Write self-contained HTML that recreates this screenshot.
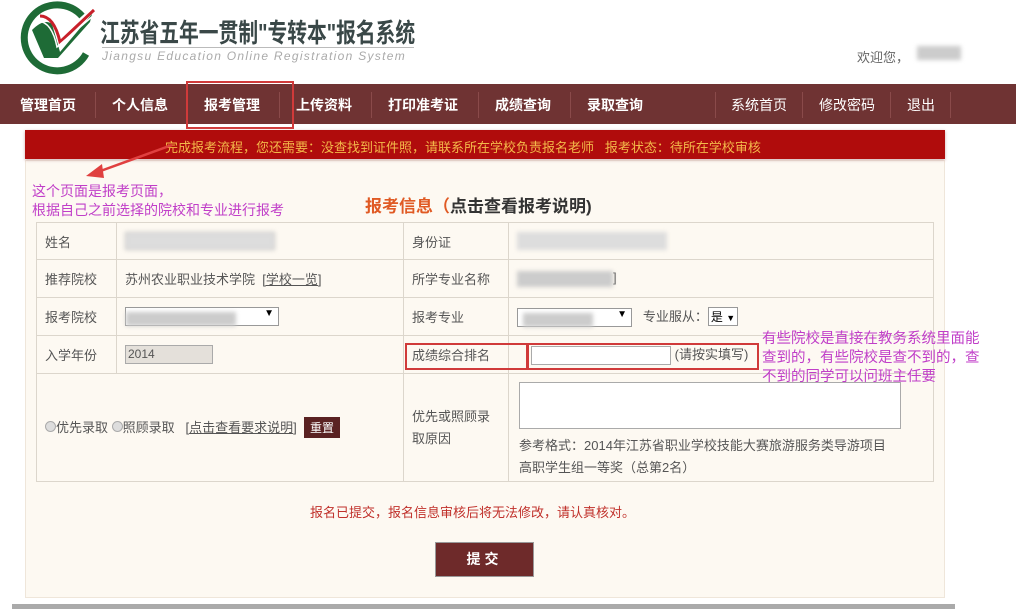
<!DOCTYPE html>
<html><head><meta charset="utf-8"><style>
*{margin:0;padding:0;box-sizing:border-box}
body{width:1016px;height:616px;background:#fff;position:relative;overflow:hidden;font-family:"Liberation Sans","Noto Sans CJK SC",sans-serif;color:#555;font-size:13px}
.a{position:absolute;white-space:nowrap}
.nav{position:absolute;left:0;top:84px;width:1016px;height:40px;background:#6f3333}
.nav span{position:absolute;top:11px;color:#fff;font-size:14px;font-weight:bold}
.nav span.l{font-weight:normal}
.nav i{position:absolute;top:8px;width:1px;height:26px;background:#5a2424;border-right:1px solid #8a4a4a}
.panel{position:absolute;left:25px;top:160px;width:920px;height:438px;background:#fdf9f2;border:1px solid #efe6da}
table{position:absolute;left:36px;top:222px;width:898px;border-collapse:collapse;background:#fdf9f2}
td{border:1px solid #dcd6cc;padding:0 8px;font-size:13px;color:#555;vertical-align:middle}
.blur{display:inline-block;background:#ccc;filter:blur(2px)}
.box{position:absolute;border:3px solid #d03a3a}
.purple{color:#c03ec8}
</style></head><body>
<svg class="a" style="left:10px;top:0px" width="92" height="76" viewBox="0 0 92 76">
<path d="M72 16 A33 33 0 1 0 76 54" fill="none" stroke="#1e6b36" stroke-width="7"/>
<path d="M22 30 Q34 18 42 24 L50 52 L82 14 L80 22 L48 58 L34 58 Z" fill="#1e6b36"/>
<path d="M30 16 Q44 16 50 42 L84 10" fill="none" stroke="#c8202a" stroke-width="3"/>
<path d="M28 21 Q42 22 47 47 L84 15" fill="none" stroke="#fff" stroke-width="1.5"/>
</svg>
<div class="a" style="left:100px;top:13px;font-size:26px;color:#3a4848;font-weight:bold;transform:scaleX(0.76);transform-origin:0 0">江苏省五年一贯制"专转本"报名系统</div>
<div class="a" style="left:102px;top:47px;width:312px;border-top:1px solid #bbb"></div>
<div class="a" style="left:102px;top:49px;font-size:12px;color:#aaa;font-style:italic;letter-spacing:1.3px">Jiangsu Education Online Registration System</div>
<div class="a" style="left:857px;top:47px;color:#666">欢迎您，</div>
<div class="a blur" style="left:917px;top:46px;width:44px;height:14px"></div>
<div class="nav">
<span style="left:20px">管理首页</span><i style="left:95px"></i>
<span style="left:112px">个人信息</span><i style="left:187px"></i>
<span style="left:204px">报考管理</span><i style="left:279px"></i>
<span style="left:296px">上传资料</span><i style="left:371px"></i>
<span style="left:388px">打印准考证</span><i style="left:478px"></i>
<span style="left:495px">成绩查询</span><i style="left:570px"></i>
<span class="l" style="left:731px">系统首页</span><i style="left:715px"></i><i style="left:802px"></i>
<span class="l" style="left:819px">修改密码</span><i style="left:890px"></i>
<span class="l" style="left:907px">退出</span><i style="left:950px"></i>
<span style="left:587px">录取查询</span>
</div>
<div class="box" style="left:186px;top:81px;width:108px;height:48px;border-width:2px"></div>
<div class="panel"></div>
<div class="a" style="left:25px;top:130px;width:920px;height:29px;background:#b00c0c;box-shadow:0 1px 3px #caa"></div>
<div class="a" style="left:165px;top:137px;color:#f3b94a;font-size:13px">完成报考流程，您还需要：没查找到证件照，请联系所在学校负责报名老师&nbsp;&nbsp;&nbsp;报考状态：待所在学校审核</div>
<svg class="a" style="left:80px;top:140px" width="100" height="45"><line x1="92" y1="5" x2="15" y2="33" stroke="#e04040" stroke-width="2.5"/><polygon points="6,36 22,24 24,38" fill="#e04040"/></svg>
<div class="a purple" style="left:32px;top:182px;font-size:14px;line-height:19px">这个页面是报考页面，<br>根据自己之前选择的院校和专业进行报考</div>
<div class="a" style="left:365px;top:192px;font-size:17px;font-weight:bold;color:#333"><span style="color:#e05a24">报考信息（</span>点击查看报考说明)</div>
<table>
<tr style="height:37px"><td style="width:80px">姓名</td><td style="width:287px"><span class="blur" style="width:150px;height:18px;background:#ddd;vertical-align:middle;border:1px solid #bbb"></span></td><td style="width:105px">身份证</td><td><span class="blur" style="width:150px;height:18px;background:#ddd;vertical-align:middle"></span></td></tr>
<tr style="height:38px"><td>推荐院校</td><td>苏州农业职业技术学院&nbsp;&nbsp;<u>[学校一览]</u></td><td>所学专业名称</td><td><span class="blur" style="width:96px;height:16px;vertical-align:middle"></span>]</td></tr>
<tr style="height:38px"><td>报考院校</td><td><span style="display:inline-block;width:154px;height:19px;border:1px solid #999;background:#fff;vertical-align:middle;position:relative"><span class="blur" style="position:absolute;left:0;top:4px;width:110px;height:14px"></span><span style="position:absolute;right:4px;top:0;font-size:10px;color:#000">▼</span></span></td><td>报考专业</td><td><span style="display:inline-block;width:115px;height:19px;border:1px solid #999;background:#fff;vertical-align:middle;position:relative"><span class="blur" style="position:absolute;left:5px;top:4px;width:70px;height:14px"></span><span style="position:absolute;right:4px;top:0;font-size:10px;color:#000">▼</span></span>&nbsp;&nbsp;&nbsp;专业服从：<span style="display:inline-block;border:1px solid #999;background:#fff;color:#000;padding:0 2px;font-size:12px">是 <small style="font-size:9px">▼</small></span></td></tr>
<tr style="height:38px"><td>入学年份</td><td><span style="display:inline-block;width:88px;height:19px;border:1px solid #aaa;background:#e4e0da;font-size:12px;padding-left:2px;line-height:17px">2014</span></td><td>成绩综合排名</td><td><span style="display:inline-block;width:140px;height:19px;border:1px solid #aaa;background:#fff;vertical-align:middle;margin-left:14px"></span> (请按实填写)</td></tr>
<tr style="height:108px"><td colspan="2" style="color:#555"><span style="display:inline-block;width:11px;height:11px;border-radius:50%;background:#ddd;border:1px solid #aaa"></span>优先录取 <span style="display:inline-block;width:11px;height:11px;border-radius:50%;background:#ddd;border:1px solid #aaa"></span>照顾录取&nbsp;&nbsp;&nbsp;[<u>点击查看要求说明</u>]&nbsp;&nbsp;<span style="display:inline-block;background:#5a2222;color:#fff;padding:2px 6px;font-size:12px">重置</span></td><td style="line-height:22px">优先或照顾录<br>取原因</td><td style="vertical-align:top;padding-top:8px"><div style="width:382px;height:47px;border:1px solid #aaa;background:#fff;margin-left:2px"></div><div style="line-height:22px;margin-top:6px;padding-left:2px">参考格式：2014年江苏省职业学校技能大赛旅游服务类导游项目<br>高职学生组一等奖（总第2名）</div></td></tr>
</table>
<div class="box" style="left:405px;top:343px;width:123px;height:27px;border-width:2px"></div>
<div class="box" style="left:527px;top:343px;width:232px;height:27px;border-width:2px"></div>
<div class="a purple" style="left:762px;top:330px;font-size:14.5px;line-height:19px">有些院校是直接在教务系统里面能<br>查到的，有些院校是查不到的，查<br>不到的同学可以问班主任要</div>
<div class="a" style="left:310px;top:502px;color:#c0302a;font-size:13px">报名已提交，报名信息审核后将无法修改，请认真核对。</div>
<div class="a" style="left:435px;top:542px;width:99px;height:35px;background:#6e2a2a;border:1px solid #999;color:#fff;font-weight:bold;font-size:14px;text-align:center;line-height:33px;letter-spacing:4px">提交</div>
<div class="a" style="left:12px;top:604px;width:943px;height:5px;background:#aaa"></div>
</body></html>
